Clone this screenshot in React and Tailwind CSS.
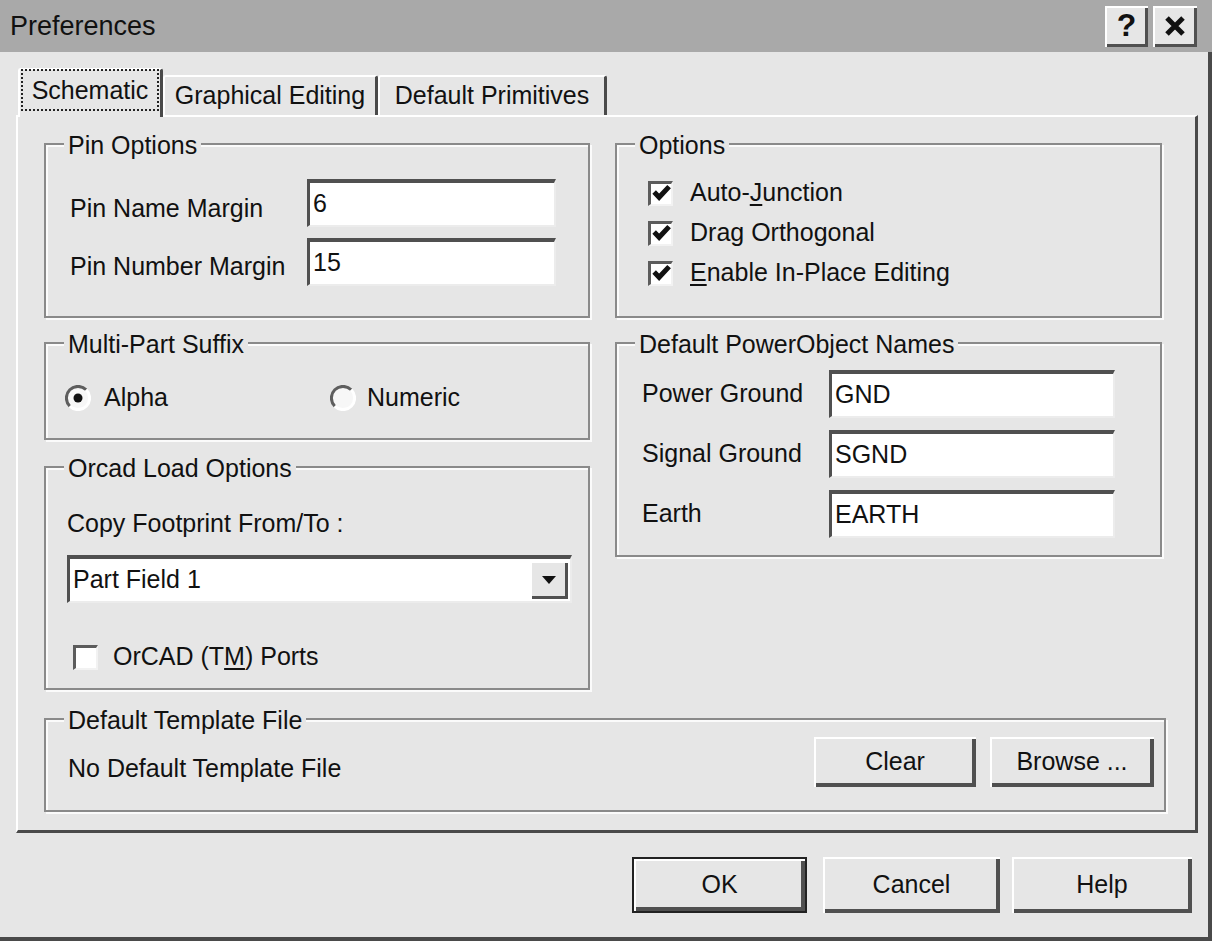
import React from 'react';

const BG = 'bg-[#e6e6e6]';

const Group = ({ title, className, children }) => (
  <div
    className={`relative border-2 border-[#8a8a8a] shadow-[inset_2px_2px_0_#fbfbfb,2px_2px_0_#fbfbfb] ${className}`}
  >
    <span className={`absolute left-[18px] -top-[15px] ${BG} px-[4px] leading-[30px] whitespace-nowrap`}>
      {title}
    </span>
    {children}
  </div>
);

const TextBox = ({ value, className = '' }) => (
  <div
    className={`h-[48px] bg-white border-t-[4px] border-l-[3px] border-r-[2px] border-b-[2px] border-t-[#505050] border-l-[#505050] border-r-[#ececec] border-b-[#ececec] flex items-center pl-[3px] ${className}`}
  >
    {value}
  </div>
);

const CheckBox = ({ checked }) => (
  <div className="w-[25px] h-[25px] shrink-0 bg-white border-t-[3px] border-l-[3px] border-r-[2px] border-b-[2px] border-t-[#5c5c5c] border-l-[#5c5c5c] border-r-[#f2f2f2] border-b-[#f2f2f2] flex items-center justify-center">
    {checked && (
      <svg width="19" height="19" viewBox="0 0 8 8">
        <polyline points="0.9,3.4 3,5.6 7.2,1.1" fill="none" stroke="#111" strokeWidth="2.1" />
      </svg>
    )}
  </div>
);

const Radio = ({ checked }) => (
  <svg width="26" height="26" viewBox="0 0 26 26" className="shrink-0">
    <circle cx="13" cy="13" r="10.5" fill="#f7f7f7" />
    <path d="M4.8 21.2 A11.5 11.5 0 0 1 21.2 4.8" fill="none" stroke="#5e5e5e" strokeWidth="3" />
    <path d="M21.2 4.8 A11.5 11.5 0 0 1 4.8 21.2" fill="none" stroke="#ffffff" strokeWidth="3" />
    {checked && <circle cx="13" cy="13" r="4.5" fill="#111" />}
  </svg>
);

const Button = ({ children, className = '', isDefault }) => (
  <div
    className={`${BG} flex items-center justify-center ${
      isDefault
        ? 'border-2 border-[#222] shadow-[inset_2px_2px_0_#fff,inset_-4px_-4px_0_#505050]'
        : 'shadow-[inset_2px_2px_0_#fff,inset_-4px_-4px_0_#505050]'
    } ${className}`}
  >
    {children}
  </div>
);

const Tab = ({ label, className = '' }) => (
  <div
    className={`h-[40px] border-t-2 border-l-2 border-white border-r-[3px] border-r-[#4a4a4a] rounded-t-[3px] flex items-center justify-center ${className}`}
  >
    {label}
  </div>
);

export default function App() {
  return (
    <div
      className={`w-[1212px] h-[941px] ${BG} flex flex-col text-[25px] text-[#111] font-['Liberation_Sans',Arial,sans-serif] shadow-[inset_-4px_-4px_0_#4a4a4a] overflow-hidden`}
    >
      {/* title bar */}
      <div className="h-[52px] bg-[#a9a9a9] flex items-center justify-between pl-[10px] pr-[15px]">
        <span className="text-[27px]">Preferences</span>
        <div className="flex gap-[5px]">
          <div className={`w-[43px] h-[41px] ${BG} shadow-[inset_2px_2px_0_#fff,inset_-3px_-3px_0_#505050] flex items-center justify-center`}>
            <span className="text-[32px] font-bold leading-none -mt-[2px]">?</span>
          </div>
          <div className={`w-[44px] h-[41px] ${BG} shadow-[inset_2px_2px_0_#fff,inset_-3px_-3px_0_#505050] flex items-center justify-center`}>
            <svg width="22" height="20" viewBox="0 0 22 20">
              <path d="M3 2 L19 18 M19 2 L3 18" stroke="#111" strokeWidth="5" />
            </svg>
          </div>
        </div>
      </div>

      <div className="flex flex-col pl-[16px] pr-[14px] pt-[16px]">
        {/* tabs */}
        <div className="flex items-end h-[47px] pl-[2px] relative z-10">
          <div className={`h-[49px] -mb-[2px] w-[145px] ${BG} border-t-2 border-l-2 border-white border-r-[3px] border-r-[#4a4a4a] rounded-t-[3px] flex items-center justify-center`}>
            <span className="border-2 border-dotted border-[#222] px-[9px] leading-[38px] -mt-[7px]">Schematic</span>
          </div>
          <Tab label="Graphical Editing" className="w-[215px]" />
          <Tab label="Default Primitives" className="w-[229px]" />
        </div>

        {/* panel */}
        <div className="w-[1182px] h-[718px] border-t-2 border-l-2 border-white border-r-[3px] border-b-[3px] border-r-[#4a4a4a] border-b-[#4a4a4a] pt-[26px] pl-[26px] flex flex-col">
          <div className="flex gap-[25px]">
            {/* left column */}
            <div className="w-[546px] flex flex-col gap-[24px]">
              <Group title="Pin Options" className="h-[175px] pt-[33px] pl-[24px] flex flex-col gap-[10px]">
                <div className="flex items-center">
                  <span className="w-[237px] mt-[12px]">Pin Name Margin</span>
                  <TextBox value="6" className="w-[249px]" />
                </div>
                <div className="flex items-center">
                  <span className="w-[237px] mt-[10px]">Pin Number Margin</span>
                  <TextBox value="15" className="w-[249px]" />
                </div>
              </Group>

              <Group title="Multi-Part Suffix" className="h-[98px] pt-[34px] pl-[19px] flex">
                <div className="w-[265px] h-[40px] flex items-center gap-[13px]">
                  <Radio checked />
                  <span>Alpha</span>
                </div>
                <div className="h-[40px] flex items-center gap-[11px]">
                  <Radio />
                  <span>Numeric</span>
                </div>
              </Group>

              <Group title="Orcad Load Options" className="h-[224px] mt-[2px] pt-[40px] pl-[21px] flex flex-col">
                <span className="leading-[30px]">Copy Footprint From/To :</span>
                <div className="mt-[17px] w-[505px] h-[48px] bg-white border-t-[4px] border-l-[3px] border-r-[2px] border-b-[2px] border-t-[#505050] border-l-[#505050] border-r-[#ececec] border-b-[#ececec] flex items-center justify-between pl-[3px] pr-[2px]">
                  <span>Part Field 1</span>
                  <div className={`w-[38px] h-[38px] ${BG} shadow-[inset_2px_2px_0_#fff,inset_-3px_-3px_0_#505050] flex items-center justify-center`}>
                    <svg width="16" height="10" viewBox="0 0 16 10">
                      <path d="M1 1 H15 L8 9 Z" fill="#111" />
                    </svg>
                  </div>
                </div>
                <div className="mt-[39px] ml-[6px] h-[30px] flex items-center gap-[15px]">
                  <CheckBox />
                  <span>
                    OrCAD (T<span className="underline underline-offset-[3px]">M</span>) Ports
                  </span>
                </div>
              </Group>
            </div>

            {/* right column */}
            <div className="w-[547px] flex flex-col gap-[24px]">
              <Group title="Options" className="h-[175px] pt-[28px] pl-[31px] flex flex-col">
                <div className="h-[40px] flex items-center gap-[17px]">
                  <CheckBox checked />
                  <span>
                    Auto-<span className="underline underline-offset-[3px]">J</span>unction
                  </span>
                </div>
                <div className="h-[40px] flex items-center gap-[17px]">
                  <CheckBox checked />
                  <span>
                    Dra<span className="underline underline-offset-[3px]">g</span> Orthogonal
                  </span>
                </div>
                <div className="h-[40px] flex items-center gap-[17px]">
                  <CheckBox checked />
                  <span>
                    <span className="underline underline-offset-[3px]">E</span>nable In-Place Editing
                  </span>
                </div>
              </Group>

              <Group title="Default PowerObject Names" className="h-[215px] pt-[26px] pl-[25px] flex flex-col gap-[12px]">
                <div className="flex items-center">
                  <span className="w-[187px]">Power Ground</span>
                  <TextBox value="GND" className="w-[286px]" />
                </div>
                <div className="flex items-center">
                  <span className="w-[187px]">Signal Ground</span>
                  <TextBox value="SGND" className="w-[286px]" />
                </div>
                <div className="flex items-center">
                  <span className="w-[187px]">Earth</span>
                  <TextBox value="EARTH" className="w-[286px]" />
                </div>
              </Group>
            </div>
          </div>

          <Group title="Default Template File" className="mt-[28px] w-[1122px] h-[94px] pt-[17px] pl-[22px] pr-[10px] flex justify-between">
            <span className="pt-[16px] leading-[30px]">No Default Template File</span>
            <div className="flex gap-[14px]">
              <Button className="w-[162px] h-[50px]">Clear</Button>
              <Button className="w-[164px] h-[50px]">Browse ...</Button>
            </div>
          </Group>
        </div>

        {/* dialog buttons */}
        <div className="flex justify-end mt-[24px] pr-[6px]">
          <Button isDefault className="w-[175px] h-[56px]">OK</Button>
          <Button className="w-[177px] h-[56px] ml-[16px]">Cancel</Button>
          <Button className="w-[180px] h-[56px] ml-[12px]">Help</Button>
        </div>
      </div>
    </div>
  );
}
